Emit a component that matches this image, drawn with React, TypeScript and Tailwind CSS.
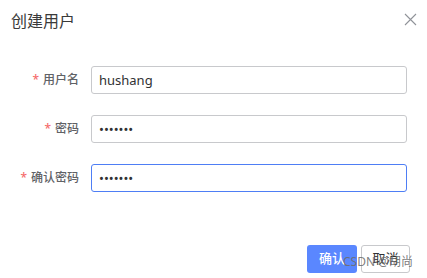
import React from "react";

const font = { fontFamily: '"Noto Sans", "Noto Sans CJK SC", sans-serif' };

function Row({ label, value, type, focused }: { label: string; value: string; type: string; focused?: boolean }) {
  return (
    <div className="flex items-center h-[28px]">
      <div className="w-[79px] flex justify-end items-center text-[12px] text-[#606266] font-medium">
        <span className="text-[#f56c6c] mr-[4px] text-[12px]">*</span>
        <span>{label}</span>
      </div>
      <input
        readOnly
        type={type}
        value={value}
        className={
          "ml-[12px] w-[316px] h-[28px] rounded-[3px] border px-[7px] text-[13px] text-[#303133] outline-none bg-white " +
          (focused ? "border-[#4e7ef5]" : "border-[#c8c9cc]")
        }
        style={font}
      />
    </div>
  );
}

export default function App() {
  return (
    <div className="relative w-[427px] h-[278px] bg-white overflow-hidden" style={font}>
      <div className="flex justify-between items-start pt-[10px] pl-[11px] pr-[10px]">
        <div className="text-[16px] leading-[22px] text-[#3a3a3a]">创建用户</div>
        <svg width="13" height="13" viewBox="0 0 13 13" className="mt-[3px]">
          <path d="M1 1 L12 12 M12 1 L1 12" stroke="#909399" strokeWidth="1.1" fill="none" />
        </svg>
      </div>
      <div className="flex flex-col gap-[21px] mt-[34px]">
        <Row label="用户名" value="hushang" type="text" />
        <Row label="密码" value="1234567" type="password" />
        <Row label="确认密码" value="1234567" type="password" focused />
      </div>
      <div className="flex justify-end gap-[4px] mt-[53px] pr-[17px]">
        <button className="w-[50px] h-[28px] rounded-[3px] bg-[#5a87ff] text-white text-[13px] font-medium">确认</button>
        <button className="w-[49px] h-[28px] rounded-[3px] bg-white border border-[#c8c9cc] text-[#303133] text-[13px]">取消</button>
      </div>
      <div className="absolute left-[343px] top-[254px] text-[12px] leading-[16px] text-[#6e6e6e]/90 pointer-events-none">
        CSDN @胡尚
      </div>
    </div>
  );
}
